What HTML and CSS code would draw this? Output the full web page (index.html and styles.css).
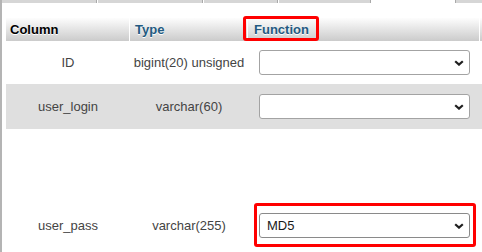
FILE: index.html
```html
<!DOCTYPE html>
<html lang="en">
<head>
<meta charset="utf-8">
<title>Insert</title>
<link rel="stylesheet" href="styles.css">
</head>
<body>
<div class="page">
  <div class="tabs">
    <div class="tab t1"></div>
    <div class="tab t2"></div>
    <div class="tab t3"></div>
    <div class="tab t4"></div>
    <div class="tab active"></div>
    <div class="tab t6"></div>
  </div>
  <div class="grid">
    <div class="row head">
      <div class="th plain">Column</div>
      <div class="th link">Type</div>
      <div class="th link fn"><span class="mark">Function</span></div>
      <div class="th"></div>
    </div>
    <div class="row r1">
      <div class="td center">ID</div>
      <div class="td center">bigint(20) unsigned</div>
      <div class="td sel"><div class="select"><span></span><svg width="10" height="6" viewBox="0 0 10 6"><path d="M1.2 1.2 L5 4.6 L8.8 1.2" fill="none" stroke="#1f1f1f" stroke-width="2.2"/></svg></div></div>
      <div class="td"></div>
    </div>
    <div class="row r2">
      <div class="td center">user_login</div>
      <div class="td center">varchar(60)</div>
      <div class="td sel"><div class="select"><span></span><svg width="10" height="6" viewBox="0 0 10 6"><path d="M1.2 1.2 L5 4.6 L8.8 1.2" fill="none" stroke="#1f1f1f" stroke-width="2.2"/></svg></div></div>
      <div class="td"></div>
    </div>
    <div class="row r3">
      <div class="td center">user_pass</div>
      <div class="td center">varchar(255)</div>
      <div class="td sel"><div class="select hl"><span class="val">MD5</span><svg width="10" height="6" viewBox="0 0 10 6"><path d="M1.2 1.2 L5 4.6 L8.8 1.2" fill="none" stroke="#1f1f1f" stroke-width="2.2"/></svg></div></div>
      <div class="td"></div>
    </div>
  </div>
</div>
</body>
</html>
```
FILE: styles.css
```css
html, body {
  margin: 0;
  padding: 0;
  background: #fff;
}
body {
  font-family: "Liberation Sans", Arial, sans-serif;
  font-size: 13px;
  color: #444;
}
.page {
  width: 482px;
  height: 252px;
  box-sizing: border-box;
  border-left: 2px solid #b4b4b4;
  overflow: hidden;
}
.tabs {
  display: flex;
  height: 3px;
}
.tab {
  height: 3px;
  box-sizing: border-box;
  background: #d6d6d6;
  border-right: 1px solid #a9a9a9;
  margin-right: 1px;
  flex: none;
}
.t1 { width: 95px; }
.t2 { width: 105px; }
.t3 { width: 74px; }
.t4 { width: 92px; margin-right: 0; }
.active { width: 85px; background: #fff; border-left: 0; border-right: 1px solid #a9a9a9; margin-right: 0; }
.t6 { width: 60px; border-right: 0; }
.grid {
  margin-top: 15px;
  margin-left: 4px;
  width: 600px;
}
.row {
  display: grid;
  grid-template-columns: 124px 118px 232px 126px;
  align-items: center;
}
.head {
  height: 23px;
  background: linear-gradient(#fdfdfd, #cbcbcb);
}
.th {
  height: 23px;
  box-sizing: border-box;
  border-right: 1px solid #fff;
  font-weight: bold;
  line-height: 23px;
  padding-left: 4px;
  text-shadow: 0 1px 0 #fff;
}
.plain { color: #000; }
.link { color: #235a81; padding-left: 5px; }
.fn { padding-left: 6px; }
.mark {
  position: relative;
}
.mark::after {
  content: "";
  position: absolute;
  left: -11px;
  right: -10px;
  top: -6px;
  bottom: -4px;
  border: 3px solid #f00;
  border-radius: 3px;
}
.r1 { height: 43px; }
.r2 { height: 45px; background: #dfdfdf; }
.r3 { height: 193px; }
.td {
  color: #444;
}
.center { text-align: center; }
.sel { padding-left: 11px; }
.select {
  position: relative;
  width: 211px;
  height: 25px;
  box-sizing: border-box;
  border: 1px solid #a3a3a3;
  border-radius: 3px;
  background: #fff;
  display: flex;
  align-items: center;
  justify-content: space-between;
  padding: 0 5px 0 7px;
}
.val {
  color: #1a1a1a;
}
.hl {
  border-color: #8a8a8a;
}
.hl::after {
  content: "";
  position: absolute;
  left: -6px;
  right: -7px;
  top: -11px;
  bottom: -10px;
  border: 3px solid #f00;
  border-radius: 3px;
}
```
